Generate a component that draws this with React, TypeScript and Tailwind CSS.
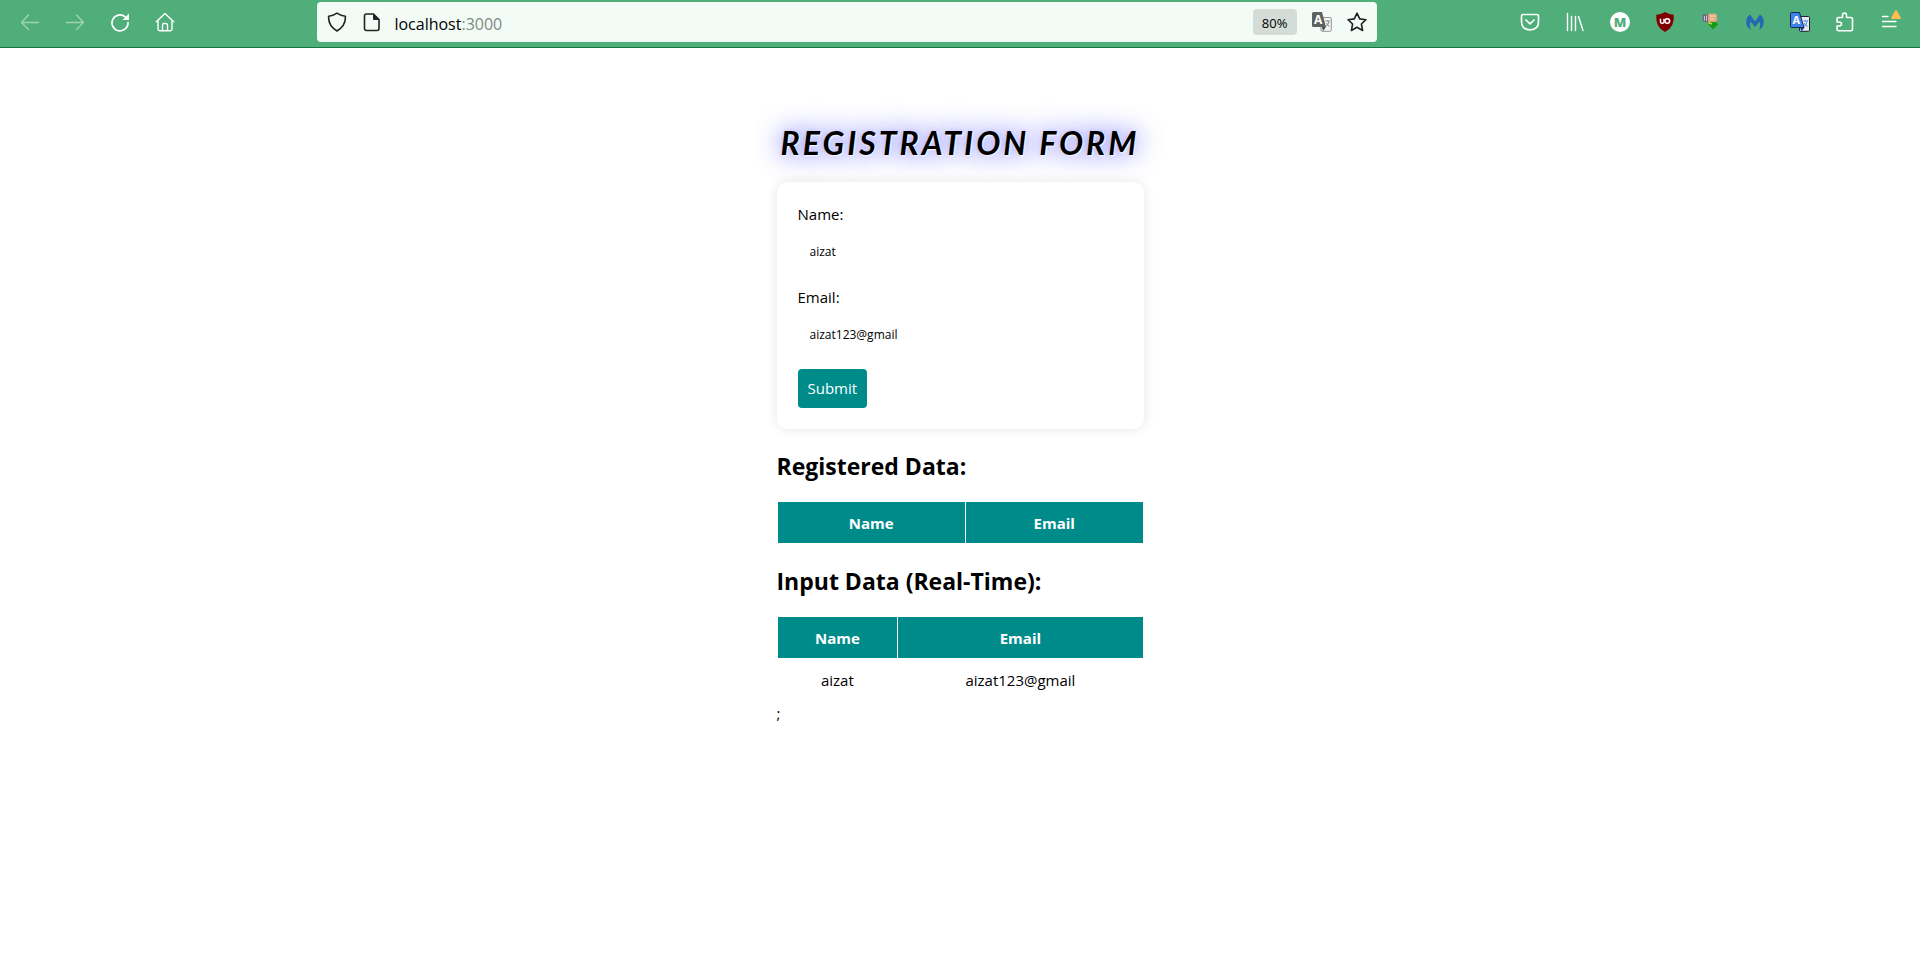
import React, { useState } from "react";

const stroke = {
  fill: "none",
  stroke: "currentColor",
  strokeWidth: 1.4,
  strokeLinecap: "round" as const,
  strokeLinejoin: "round" as const,
};

function Icon({ children }: { children: React.ReactNode }) {
  return (
    <svg width="20" height="20" viewBox="0 0 20 20" aria-hidden="true" className="shrink-0">
      {children}
    </svg>
  );
}

function ToolButton({
  label,
  dim,
  children,
}: {
  label: string;
  dim?: boolean;
  children: React.ReactNode;
}) {
  return (
    <button
      type="button"
      aria-label={label}
      disabled={dim}
      className="flex h-10 w-[45px] items-center justify-center text-white disabled:text-white/45"
    >
      <Icon>{children}</Icon>
    </button>
  );
}

function BrowserBar() {
  return (
    <header className="flex h-12 items-start border-b border-[#15793f] bg-[#50ae7a] pt-0.5 pr-2 pl-[7px]">
      <nav aria-label="Navigation" className="flex">
        <ToolButton label="Back" dim>
          <path {...stroke} d="M18.500 10.500H1.500M8.500 3L1.500 10.500L8.500 17.500" />
        </ToolButton>
        <ToolButton label="Forward" dim>
          <path {...stroke} d="M1.500 10.500H18.500M11.500 3L18.500 10.500L11.500 17.500" />
        </ToolButton>
        <ToolButton label="Reload">
          <path {...stroke} strokeWidth="1.700" d="M18 10.500A8 8 0 1 1 15.200 4.800" />
          <path d="M19 1.500V8H12.500Z" fill="currentColor" />
        </ToolButton>
        <ToolButton label="Home">
          <path
            {...stroke}
            d="M1.300 9.800L10 1.500L18.700 9.800M3 8.500V17Q3 18.700 4.700 18.700H15.300Q17 18.700 17 17V8.500M7.500 18.500V13Q7.500 11.500 9 11.500H11Q12.500 11.500 12.500 13V18.500"
          />
        </ToolButton>
      </nav>

      <div className="flex-1" />
      <div className="flex h-10 w-[55.6%] items-center rounded bg-[#f3fbf7] pr-2.5 pl-2.5 text-[#1c2521]">
        <Icon>
          <path
            {...stroke}
            strokeWidth="1.600"
            d="M10 1.200Q13.500 3.700 18.300 4.200Q19.200 13.500 10 19Q0.800 13.500 1.700 4.200Q6.500 3.700 10 1.200Z"
          />
        </Icon>
        <span className="ml-[15px] flex">
          <Icon>
            <path
              {...stroke}
              strokeWidth="1.600"
              d="M4.500 2H11.500L17 7.500V16.500Q17 18.500 15 18.500H4.500Q2.500 18.500 2.500 16.500V4Q2.500 2 4.500 2Z"
            />
            <path d="M11 1.500L17.500 8H12Q11 8 11 7Z" fill="currentColor" />
          </Icon>
        </span>
        <p className="ml-3 flex-1 pt-[3px] text-base leading-6 text-black">
          localhost<span className="text-[#7f8a85]">:3000</span>
        </p>
        <button
          type="button"
          className="h-[26px] w-11 rounded bg-[#d4dcd8] pt-px text-center text-[13px] leading-[26px] text-black"
        >
          80%
        </button>
        <button type="button" aria-label="Translate this page" className="ml-[15px]">
          <Icon>
            <rect x="9" y="5.500" width="10.300" height="13.800" rx="1" fill="#f3f5f4" stroke="#929795" />
            <path d="M1.500 0H10L14 15H1.500Q0 15 0 13.500V1.500Q0 0 1.500 0Z" fill="#5d615f" />
            <path d="M10 15H14L11 19Z" fill="#444947" />
            <text x="2" y="12" fontSize="12" fontWeight="700" fill="#fff">A</text>
            <path d="M13.500 9H18M15.700 8V9M17 9.500Q16.500 13 13.500 14.500M14.500 11Q15.500 13.500 17.500 14.500" fill="none" stroke="#858a88" />
          </Icon>
        </button>
        <button type="button" aria-label="Bookmark" className="ml-[15px]">
          <Icon>
            <path
              {...stroke}
              strokeWidth="1.600"
              d="M10 1.200L12.700 6.900L19 7.700L14.400 12L15.600 18.500L10 15.300L4.400 18.500L5.600 12L1 7.700L7.300 6.900Z"
            />
          </Icon>
        </button>
      </div>
      <div className="flex-1" />

      <nav aria-label="Extensions" className="flex">
        <ToolButton label="Pocket">
          <path
            {...stroke}
            strokeWidth="1.700"
            d="M3 2.500H17Q18.500 2.500 18.500 4V9.500Q18.500 17.800 10 17.800Q1.500 17.800 1.500 9.500V4Q1.500 2.500 3 2.500ZM6 8L10 11.800L14 8"
          />
        </ToolButton>
        <ToolButton label="Library">
          <path {...stroke} d="M2.500 1.500V18.500M6.500 4.500V18.500M10.500 4.500V18.500M13.500 4.500L18 18.500" />
        </ToolButton>
        <ToolButton label="Account">
          <circle cx="10" cy="10" r="10" fill="#fff" />
          <text x="10" y="14.800" fontSize="13" fontWeight="800" textAnchor="middle" fill="#50ae7a">M</text>
        </ToolButton>
        <ToolButton label="Content blocker">
          <path d="M10 0Q14 2.500 18.700 2.800Q20 15 10 20Q0 15 1.300 2.800Q6 2.500 10 0Z" fill="#800000" />
          <path
            d="M5.500 6.800V9.700Q5.500 11.300 7.200 11.300Q9 11.300 9 9.700V6.800"
            fill="none"
            stroke="#fff"
            strokeWidth="1.500"
          />
          <circle cx="12.300" cy="9" r="2.300" fill="none" stroke="#fff" strokeWidth="1.500" />
        </ToolButton>
        <ToolButton label="Download manager">
          <path d="M2.500 2.500H8V10.500L3 9.500Z" fill="#75617e" />
          <path d="M4.500 4V8.500M6.500 3.500V9" stroke="#c9c2d2" />
          <rect x="8" y="1.500" width="9" height="9" rx="2.500" fill="#dfa67f" />
          <path d="M10 4H15.500M10 7H14.500" stroke="#f3d2ad" strokeWidth="1.500" />
          <path d="M10 10H17V12H18.500L13 17.500L8 12H10Z" fill="#159b16" />
          <path d="M8.500 10.500L12 12" stroke="#d9d13f" strokeWidth="1.500" />
        </ToolButton>
        <ToolButton label="Browser guard">
          <path
            d="M5 2.500L10 9.500L15 2.500Q19 5 18.700 10.500Q18.500 15.500 14 18Q16 14 14.500 9.500L10 15L5.500 9.500Q4 14 6 18Q1.500 15.500 1.300 10.500Q1 5 5 2.500Z"
            fill="#2468b5"
          />
        </ToolButton>
        <ToolButton label="Translate">
          <rect x="9.500" y="4.500" width="10" height="14.800" rx="1" fill="#e6eaef" stroke="#1d242b" />
          <path d="M10 15.500H14.500L11.500 19.500Z" fill="#1746a8" />
          <path d="M1.500 0.500H9.500L14 15.500H1.500Q0.500 15.500 0.500 14.500V1.500Q0.500 0.500 1.500 0.500Z" fill="#4082ed" stroke="#172b4c" />
          <text x="2.500" y="12.300" fontSize="11" fontWeight="700" fill="#fff">A</text>
          <path d="M13.500 9H18M15.700 8V9M17 9.500Q16.500 13 14 14.500M14 11Q15.500 13.500 17.500 14.500" fill="none" stroke="#4685e6" />
        </ToolButton>
        <ToolButton label="Add-ons">
          <path
            {...stroke}
            strokeWidth="1.600"
            d="M3.500 5.500H7.500V3.300Q7.500 1 9.500 1Q11.500 1 11.500 3.300V5.500H16Q17.500 5.500 17.500 7V17.200Q17.500 18.700 16 18.700H3.500Q2 18.700 2 17.200V14H4Q6.500 14 6.500 12Q6.500 10 4 10H2V7Q2 5.500 3.500 5.500Z"
          />
        </ToolButton>
        <button
          type="button"
          aria-label="Menu"
          className="relative flex h-10 w-[45px] items-center justify-center text-white"
        >
          <Icon>
            <path {...stroke} d="M2.500 4.500H8M2.500 9.500H16M2.500 14.500H16" />
          </Icon>
          <svg width="10" height="9" viewBox="0 0 10 9" aria-hidden="true" className="absolute top-2 right-[11px]">
            <path d="M4 0.800Q5 -0.500 6 0.800L9.700 7.500Q10 9 8.800 9H1.200Q0 9 0.300 7.500Z" fill="#ffbd4f" />
          </svg>
        </button>
      </nav>
    </header>
  );
}

function DataTable({ rows }: { rows: { name: string; email: string }[] }) {
  const filled = rows.length > 0;
  const head = "h-[42px] border border-white p-0 font-bold";
  return (
    <table className="w-full border-collapse text-center text-[15px] leading-5">
      <thead className="bg-[#008b8b] text-white">
        <tr>
          <th scope="col" className={filled ? `${head} w-[33%]` : `${head} w-[51.5%]`}>Name</th>
          <th scope="col" className={head}>Email</th>
        </tr>
      </thead>
      <tbody>
        {rows.map((row, i) => (
          <tr key={i}>
            <td className="h-[42px] p-0">{row.name}</td>
            <td className="h-[42px] p-0">{row.email}</td>
          </tr>
        ))}
      </tbody>
    </table>
  );
}

function Field({
  id,
  label,
  value,
  onChange,
}: {
  id: string;
  label: string;
  value: string;
  onChange: (value: string) => void;
}) {
  return (
    <div className="mb-[17px]">
      <label htmlFor={id} className="block text-[15px] leading-[22px]">{label}</label>
      <input
        id={id}
        type="text"
        value={value}
        onChange={(e) => onChange(e.target.value)}
        className="mt-2 block h-9 w-full px-3 text-xs outline-none"
      />
    </div>
  );
}

export default function App() {
  const [name, setName] = useState("aizat");
  const [email, setEmail] = useState("aizat123@gmail");

  return (
    <div className="min-h-screen bg-white font-['Open_Sans','Noto_Sans',sans-serif] text-black">
      <BrowserBar />
      <main className="mx-auto w-[367px] pt-[75px]">
        <h1 className="text-center font-['Lato',sans-serif] text-[32px] leading-10 font-bold tracking-[3px] whitespace-nowrap italic [text-shadow:1px_1px_2px_white,0_0_26px_rgba(0,0,255,0.75),0_0_5px_rgba(0,0,255,0.12)]">
          REGISTRATION FORM
        </h1>
        <form
          onSubmit={(e) => e.preventDefault()}
          className="mt-[19px] rounded-[10px] bg-white p-[21px] shadow-[0_0_12px_rgba(0,0,0,0.1)]"
        >
          <Field id="name" label="Name:" value={name} onChange={setName} />
          <Field id="email" label="Email:" value={email} onChange={setEmail} />
          <button
            type="submit"
            className="h-[39px] rounded bg-[#008b8b] px-2.5 text-[15px] leading-[39px] text-white"
          >
            Submit
          </button>
        </form>
        <h2 className="mt-[19px] mb-[17px] text-[23px] leading-9 font-bold">Registered Data:</h2>
        <DataTable rows={[]} />
        <h2 className="mt-[19px] mb-[17px] text-[23px] leading-9 font-bold">Input Data (Real-Time):</h2>
        <DataTable rows={[{ name, email }]} />
        <p className="text-[15px] leading-6">;</p>
      </main>
    </div>
  );
}
